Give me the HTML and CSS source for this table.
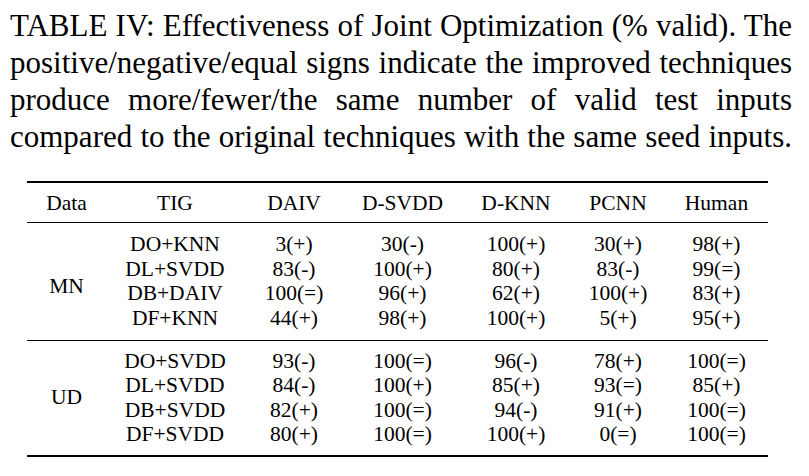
FILE: index.html
```html
<!DOCTYPE html>
<html>
<head>
<meta charset="utf-8">
<link rel="stylesheet" href="styles.css">
</head>
<body>
<div class="page">
  <div class="caption">
    <div class="ln">TABLE IV: Effectiveness of Joint Optimization (% valid). The</div>
    <div class="ln">positive/negative/equal signs indicate the improved techniques</div>
    <div class="ln">produce more/fewer/the same number of valid test inputs</div>
    <div class="ln">compared to the original techniques with the same seed inputs.</div>
  </div>
  <table class="tbl">
    <colgroup>
      <col class="c-data"><col class="c-tig"><col class="c-daiv"><col class="c-svdd"><col class="c-knn"><col class="c-pcnn"><col class="c-human">
    </colgroup>
    <thead>
      <tr class="hd"><th>Data</th><th>TIG</th><th>DAIV</th><th>D-SVDD</th><th>D-KNN</th><th>PCNN</th><th>Human</th></tr>
    </thead>
    <tbody class="grp g1">
      <tr class="first"><td class="lbl" rowspan="4">MN</td><td>DO+KNN</td><td>3(+)</td><td>30(-)</td><td>100(+)</td><td>30(+)</td><td>98(+)</td></tr>
      <tr><td>DL+SVDD</td><td>83(-)</td><td>100(+)</td><td>80(+)</td><td>83(-)</td><td>99(=)</td></tr>
      <tr><td>DB+DAIV</td><td>100(=)</td><td>96(+)</td><td>62(+)</td><td>100(+)</td><td>83(+)</td></tr>
      <tr class="last"><td>DF+KNN</td><td>44(+)</td><td>98(+)</td><td>100(+)</td><td>5(+)</td><td>95(+)</td></tr>
    </tbody>
    <tbody class="grp g2">
      <tr class="first"><td class="lbl" rowspan="4">UD</td><td>DO+SVDD</td><td>93(-)</td><td>100(=)</td><td>96(-)</td><td>78(+)</td><td>100(=)</td></tr>
      <tr><td>DL+SVDD</td><td>84(-)</td><td>100(+)</td><td>85(+)</td><td>93(=)</td><td>85(+)</td></tr>
      <tr><td>DB+SVDD</td><td>82(+)</td><td>100(=)</td><td>94(-)</td><td>91(+)</td><td>100(=)</td></tr>
      <tr class="last"><td>DF+SVDD</td><td>80(+)</td><td>100(=)</td><td>100(+)</td><td>0(=)</td><td>100(=)</td></tr>
    </tbody>
  </table>
</div>
</body>
</html>
```
FILE: styles.css
```css
html, body {
  margin: 0;
  padding: 0;
  background: #ffffff;
}
body {
  font-family: "Liberation Serif", "Times New Roman", serif;
  color: #000000;
}
.page {
  padding: 8px 0 0 10px;
}
.caption {
  width: 782px;
  font-size: 31px;
  line-height: 36.9px;
}
.caption .ln {
  text-align: justify;
  text-align-last: justify;
}
.tbl {
  margin: 25px 0 0 17px;
  width: 741px;
  table-layout: fixed;
  border-collapse: collapse;
  border-spacing: 0;
  font-size: 21.5px;
  line-height: 24.6px;
  border-top: 2px solid #000;
}
.c-data { width: 79px; }
.c-tig { width: 138px; }
.c-daiv { width: 100px; }
.c-svdd { width: 117px; }
.c-knn { width: 110px; }
.c-pcnn { width: 94px; }
.c-human { width: 103px; }
.tbl th, .tbl td {
  padding: 0;
  text-align: center;
  font-weight: normal;
  white-space: nowrap;
}
.tbl thead {
  border-bottom: 1px solid #000;
}
.tbl .hd th {
  padding-top: 8px;
  padding-bottom: 7px;
}
.tbl .g1 {
  border-bottom: 1px solid #000;
}
.tbl .g2 {
  border-bottom: 2px solid #000;
}
.tbl .first td {
  padding-top: 8px;
}
.tbl .last td {
  padding-bottom: 8px;
}
.tbl .g1 .first td {
  padding-top: 9px;
}
.tbl .g1 .last td {
  padding-bottom: 9px;
}
.tbl td.lbl {
  padding: 0;
  vertical-align: middle;
}
```
